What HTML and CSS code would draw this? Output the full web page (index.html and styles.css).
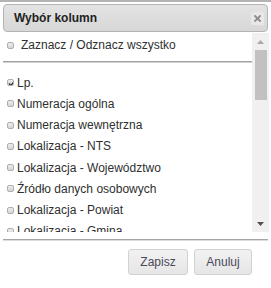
FILE: index.html
```html
<!DOCTYPE html>
<html lang="pl">
<head>
<meta charset="utf-8">
<title>Wybór kolumn</title>
<link rel="stylesheet" href="styles.css">
</head>
<body>
<div class="topbar"></div>
<div class="titlebar">
  <span class="title">Wybór kolumn</span>
  <span class="close" title="Zamknij">
    <svg width="7" height="7" viewBox="0 0 7 7"><path d="M1 1L6 6M6 1L1 6" stroke="#8c8c8c" stroke-width="1.8" stroke-linecap="square"/></svg>
  </span>
</div>
<div class="scroll">
  <div class="list">
    <label class="all"><input type="checkbox" class="cb"><span>Zaznacz / Odznacz wszystko</span></label>
    <div class="sep"></div>
    <ul class="cols">
      <li><label><input type="checkbox" class="cb" checked><span>Lp.</span></label></li>
      <li><label><input type="checkbox" class="cb"><span>Numeracja ogólna</span></label></li>
      <li><label><input type="checkbox" class="cb"><span>Numeracja wewnętrzna</span></label></li>
      <li><label><input type="checkbox" class="cb"><span>Lokalizacja - NTS</span></label></li>
      <li><label><input type="checkbox" class="cb"><span>Lokalizacja - Województwo</span></label></li>
      <li><label><input type="checkbox" class="cb"><span>Źródło danych osobowych</span></label></li>
      <li><label><input type="checkbox" class="cb"><span>Lokalizacja - Powiat</span></label></li>
      <li><label><input type="checkbox" class="cb"><span>Lokalizacja - Gmina</span></label></li>
    </ul>
  </div>
  <div class="sbar">
    <div class="sbtn">
      <svg width="7" height="4" viewBox="0 0 7 4"><path d="M0 4L3.5 0L7 4Z" fill="#a8a8a8"/></svg>
    </div>
    <div class="thumb"></div>
    <div class="track"></div>
    <div class="sbtn">
      <svg width="7" height="4" viewBox="0 0 7 4"><path d="M0 0L7 0L3.5 4Z" fill="#505050"/></svg>
    </div>
  </div>
</div>
<div class="bottomline"></div>
<div class="buttons">
  <button class="btn btn-save" type="button">Zapisz</button>
  <button class="btn btn-cancel" type="button">Anuluj</button>
</div>
</body>
</html>
```
FILE: styles.css
```css
html, body {
  margin: 0;
  padding: 0;
  background: #fff;
}
body {
  font-family: "Liberation Sans", Arial, sans-serif;
  font-size: 12px;
  color: #2f2f2f;
  width: 271px;
  height: 288px;
  overflow: hidden;
}
.topbar {
  height: 2px;
  background: #b4b4b4;
}
.titlebar {
  margin: 2px 3px 0 3px;
  height: 26px;
  border: 1px solid #b3b3b3;
  border-radius: 4px;
  background: linear-gradient(#e3e3e3, #d7d7d7);
  display: flex;
  align-items: center;
  justify-content: space-between;
  padding: 0 3px 0 10px;
}
.title {
  font-weight: bold;
  font-size: 12px;
  color: #222;
}
.close {
  width: 13px;
  height: 13px;
  background: #e8e8e8;
  border-radius: 2px;
  display: flex;
  align-items: center;
  justify-content: center;
}
.scroll {
  margin: 1px 2px 0 3px;
  height: 199px;
  display: flex;
}
.list {
  flex: 1;
  min-width: 0;
  overflow: hidden;
}
.sbar {
  width: 17px;
  flex: none;
  background: #f0f0f0;
  display: flex;
  flex-direction: column;
}
.sbtn {
  height: 17px;
  flex: none;
  display: flex;
  align-items: center;
  justify-content: center;
}
.thumb {
  height: 50px;
  flex: none;
  margin: 0 2px 0 3px;
  background: #c1c1c1;
}
.track {
  flex: 1;
}
.cb {
  -webkit-appearance: none;
  appearance: none;
  margin: 0;
  width: 7px;
  height: 7px;
  border: 1px solid #adadad;
  border-radius: 2px;
  background: linear-gradient(#ededed, #d4d4d4);
  flex: none;
}
.cb:checked {
  background-image: url("data:image/svg+xml;utf8,<svg xmlns='http://www.w3.org/2000/svg' width='7' height='7'><path d='M1 3.5L3 5.5L6.5 1' stroke='%23333' stroke-width='1.4' fill='none'/></svg>"), linear-gradient(#ededed, #d4d4d4);
}
.all {
  display: flex;
  align-items: center;
  height: 24px;
  padding-left: 4px;
  gap: 7px;
}
.sep {
  margin: 4px 0 9px 0;
  border-top: 1px solid #a2a2a2;
  border-bottom: 1px solid #d0d0d0;
}
.cols {
  list-style: none;
  margin: 0;
  padding: 0;
}
.cols label {
  display: flex;
  align-items: center;
  height: 21.25px;
  padding-left: 4px;
  gap: 3px;
  white-space: nowrap;
}
.bottomline {
  margin: 7px 3px 0 3px;
  border-top: 1px solid #a6a6a6;
  border-bottom: 1px solid #dcdcdc;
}
.buttons {
  display: flex;
  justify-content: flex-end;
  gap: 6px;
  margin: 8px 19px 0 0;
}
.btn {
  font-family: "Liberation Sans", Arial, sans-serif;
  font-size: 12px;
  color: #4a4a5a;
  height: 26px;
  padding: 0;
  border: 1px solid #d2d2d2;
  border-radius: 3px;
  background: linear-gradient(#f2f2f2, #e6e6e6);
}
.btn-save {
  width: 60px;
}
.btn-cancel {
  width: 58px;
}
```
